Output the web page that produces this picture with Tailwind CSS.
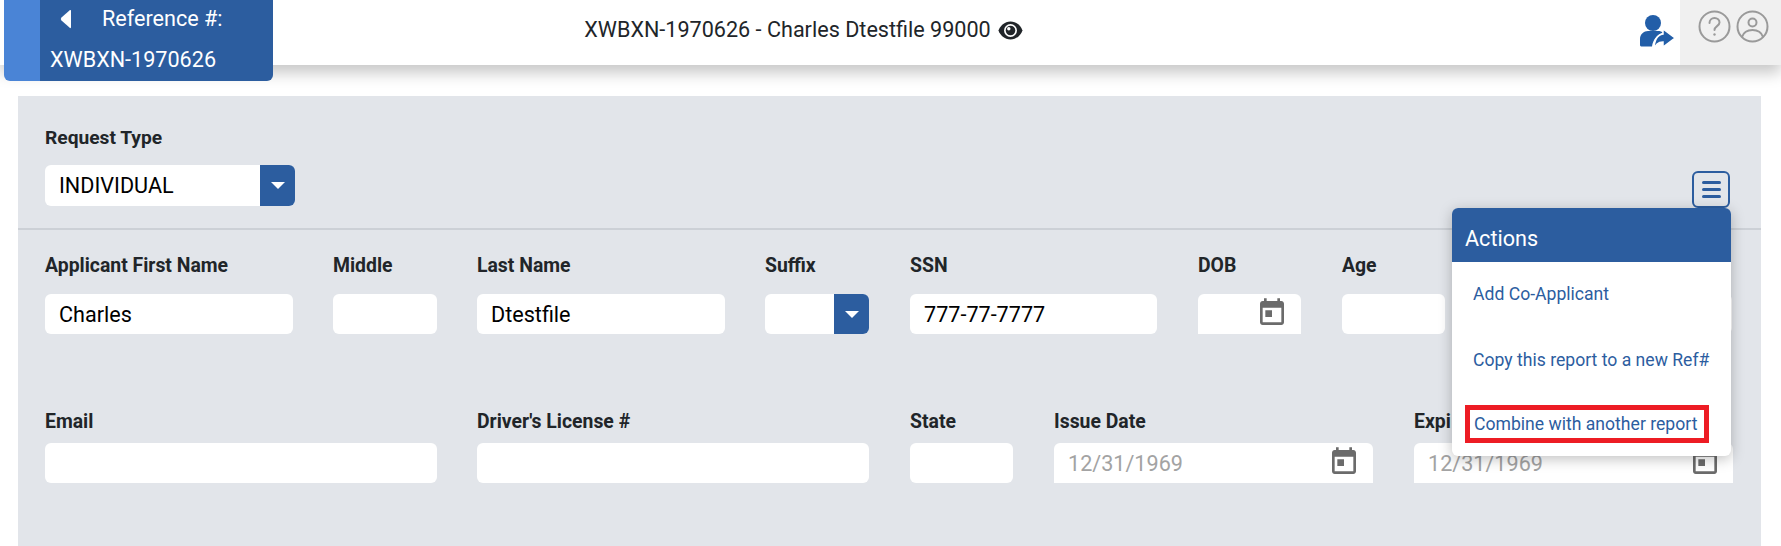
<!DOCTYPE html>
<html lang="en">
<head>
    <meta charset="UTF-8">
    <title>Reference XWBXN-1970626</title>
    <script src="https://cdn.jsdelivr.net/npm/@tailwindcss/browser@4"></script>
</head>
<body class="bg-white h-[546px] overflow-hidden font-['Roboto',sans-serif] text-[#212529]">

    <!-- top bar -->
    <header class="relative z-10 h-[65px] bg-white flex shadow-[0_8px_14px_rgba(0,0,0,0.22)]">
        <div class="absolute left-[4px] top-0 w-[269px] h-[81px] rounded-b-[6px] bg-[#2c5d9f] border-l-[36px] border-[#4a84d6] text-white text-[21.6px] leading-[24px]">
            <div class="flex items-center h-[42px] pb-[4px]">
                <svg class="ml-[20px] w-[11px] h-[20px]" viewBox="0 0 11 20" fill="white"><path d="M10 1 L1.5 8.5 Q0 10 1.5 11.500 L10 19 Q11 19.5 11 18 V2 Q11 .5 10 1z"/></svg>
                <span class="ml-[31px]">Reference #:</span>
            </div>
            <div class="pl-[10px] pt-[6px]">XWBXN-1970626</div>
        </div>

        <div class="flex-1 flex items-center justify-center pr-[27px] pb-[4px] gap-[7px] text-[21.6px]">
            <span>XWBXN-1970626 - Charles Dtestfile 99000</span>
            <svg class="w-[25px] h-[19px] mb-[1px]" viewBox="0 0 25 19">
                <path fill="#212529" d="M12.500 .5C6.500.5 2 5 .5 9.500 2 14 6.500 18.500 12.500 18.500s10.500-4.500 12-9C23 5 18.500.5 12.500.5z"/>
                <circle cx="12.500" cy="9.500" r="6.500" fill="white"/>
                <circle cx="12.500" cy="9.500" r="4.800" fill="#212529"/>
                <circle cx="10.800" cy="7.800" r="1.700" fill="white"/>
            </svg>
        </div>

        <div class="w-[46px] flex items-start pt-[14px] pl-[5px]">
            <svg class="w-[36px] h-[38px] shrink-0" viewBox="0 0 36 38" fill="#225ea8">
                <circle cx="14" cy="9" r="8"/>
                <path d="M1 31v-6c0-5 4-8 8-8h10c2 0 4 .6 5 1.500-6 2-10 7-11 14H3c-1 0-2-.5-2-1.500z"/>
                <path d="M24 15l12 9-12 9v-5c-5 0-8 3-9 8 0-9 3-15 9-16z" stroke="white" stroke-width="1.500"/>
            </svg>
        </div>

        <div class="w-[101px] bg-[#f0f0f0] flex items-start gap-[5px] pt-[10px] pl-[18px]">
            <svg class="w-[33px] h-[33px]" viewBox="0 0 33 33" fill="none" stroke="#9a9a9a" stroke-width="2"><circle cx="16.500" cy="16.500" r="15"/><path d="M11.500 13c0-3 2.200-5 5-5s5 2 5 4.500c0 3.500-5 3.800-5 7.500" stroke-linecap="round"/><circle cx="16.500" cy="24.500" r="1.200" fill="#9a9a9a" stroke="none"/></svg>
            <svg class="w-[33px] h-[33px]" viewBox="0 0 33 33" fill="none" stroke="#9a9a9a" stroke-width="2"><circle cx="16.500" cy="16.500" r="15"/><circle cx="16.500" cy="12.500" r="4"/><path d="M6 27c1.500-4.500 5-7 10.500-7S25.500 22.500 27 27"/></svg>
        </div>
    </header>

    <!-- form panel -->
    <main class="relative ml-[18px] mr-[20px] mt-[31px] h-[450px] bg-[#e2e5ea]">
        <section class="h-[134px] border-b-2 border-[#ccd0d6] px-[27px] pt-[32px]">
            <label class="block text-[19.2px] leading-[20px] font-bold">Request Type</label>
            <div class="mt-[17px] w-[250px] h-[41px] bg-white rounded-[6px] flex overflow-hidden">
                <span class="flex-1 pl-[14px] text-[21.6px] leading-[41px] text-black">INDIVIDUAL</span>
                <span class="w-[35px] bg-[#2c5d9f] flex items-center justify-center">
                    <span class="w-0 h-0 border-x-[7px] border-x-transparent border-t-[7px] border-t-white"></span>
                </span>
            </div>
            <button class="absolute left-[1674px] top-[75px] w-[38px] h-[37px] rounded-[6px] border-2 border-[#2c5d9f] flex flex-col items-center justify-center gap-[4px]">
                <span class="w-[19px] h-[3px] bg-[#2c5d9f] rounded-full"></span>
                <span class="w-[19px] h-[3px] bg-[#2c5d9f] rounded-full"></span>
                <span class="w-[19px] h-[3px] bg-[#2c5d9f] rounded-full"></span>
            </button>
        </section>

        <section class="px-[27px] pt-[26px] grid grid-cols-[248px_104px_248px_104px_248px_104px_104px_247px] gap-x-[40px] [&>*:nth-child(n+5)]:ml-[1px]">
            <div>
                <label class="block text-[19.4px] leading-[20px] font-bold">Applicant First Name</label>
                <div class="mt-[18px] h-[40px] bg-white rounded-[6px] px-[14px] text-[21.6px] leading-[42px] text-black">Charles</div>
            </div>
            <div>
                <label class="block text-[19.4px] leading-[20px] font-bold">Middle</label>
                <div class="mt-[18px] h-[40px] bg-white rounded-[6px]"></div>
            </div>
            <div>
                <label class="block text-[19.4px] leading-[20px] font-bold">Last Name</label>
                <div class="mt-[18px] h-[40px] bg-white rounded-[6px] px-[14px] text-[21.6px] leading-[42px] text-black">Dtestfile</div>
            </div>
            <div>
                <label class="block text-[19.4px] leading-[20px] font-bold">Suffix</label>
                <div class="mt-[18px] h-[40px] bg-white rounded-[6px] flex justify-end overflow-hidden">
                    <span class="w-[35px] bg-[#2c5d9f] flex items-center justify-center">
                        <span class="w-0 h-0 border-x-[7px] border-x-transparent border-t-[7px] border-t-white"></span>
                    </span>
                </div>
            </div>
            <div>
                <label class="block text-[19.4px] leading-[20px] font-bold">SSN</label>
                <div class="mt-[18px] h-[40px] bg-white rounded-[6px] px-[14px] text-[21.6px] leading-[42px] text-black">777-77-7777</div>
            </div>
            <div>
                <label class="block text-[19.4px] leading-[20px] font-bold">DOB</label>
                <div class="mt-[18px] h-[40px] bg-white rounded-t-[6px] flex justify-end pr-[13px] pt-[3px]">
                    <svg class="w-8 h-8" viewBox="0 0 24 24" fill="#6b6b6b"><path d="M19 3h-1V1h-2v2H8V1H6v2H5c-1.110 0-1.990.9-1.990 2L3 19c0 1.100.89 2 2 2h14c1.100 0 2-.9 2-2V5c0-1.100-.9-2-2-2zm0 16H5V8h14v11zM7 10h5v5H7z"/></svg>
                </div>
            </div>
            <div>
                <label class="block text-[19.4px] leading-[20px] font-bold">Age</label>
                <div class="mt-[18px] h-[40px] bg-white rounded-[6px]"></div>
            </div>
            <div>
                <div class="h-[20px]"></div>
                <div class="mt-[18px] h-[40px] bg-white rounded-[6px]"></div>
            </div>
        </section>

        <section class="px-[27px] pt-[78px] grid grid-cols-[392px_392px_104px_320px_320px] gap-x-[40px]">
            <div>
                <label class="block text-[19.4px] leading-[20px] font-bold">Email</label>
                <div class="mt-[11px] h-[40px] bg-white rounded-[6px]"></div>
            </div>
            <div>
                <label class="block text-[19.4px] leading-[20px] font-bold">Driver's License #</label>
                <div class="mt-[11px] h-[40px] bg-white rounded-[6px]"></div>
            </div>
            <div class="ml-[1px]">
                <label class="block text-[19.4px] leading-[20px] font-bold">State</label>
                <div class="mt-[11px] h-[40px] bg-white rounded-[6px]"></div>
            </div>
            <div class="ml-[1px]">
                <label class="block text-[19.4px] leading-[20px] font-bold">Issue Date</label>
                <div class="mt-[11px] h-[40px] bg-white rounded-t-[6px] flex justify-between pl-[14px] pr-[13px] text-[21.6px] leading-[42px] text-[#a3a3a3]">
                    12/31/1969
                    <svg class="w-8 h-8 mt-[3px]" viewBox="0 0 24 24" fill="#6b6b6b"><path d="M19 3h-1V1h-2v2H8V1H6v2H5c-1.110 0-1.990.9-1.990 2L3 19c0 1.100.89 2 2 2h14c1.100 0 2-.9 2-2V5c0-1.100-.9-2-2-2zm0 16H5V8h14v11zM7 10h5v5H7z"/></svg>
                </div>
            </div>
            <div class="ml-[1px]">
                <label class="block text-[19.4px] leading-[20px] font-bold">Expi</label>
                <div class="mt-[11px] h-[40px] bg-white rounded-t-[6px] flex justify-between pl-[14px] pr-[12px] text-[21.6px] leading-[42px] text-[#a3a3a3]">
                    12/31/1969
                    <svg class="w-8 h-8 mt-[3px]" viewBox="0 0 24 24" fill="#6b6b6b"><path d="M19 3h-1V1h-2v2H8V1H6v2H5c-1.110 0-1.990.9-1.990 2L3 19c0 1.100.89 2 2 2h14c1.100 0 2-.9 2-2V5c0-1.100-.9-2-2-2zm0 16H5V8h14v11zM7 10h5v5H7z"/></svg>
                </div>
            </div>
        </section>

        <!-- actions menu -->
        <div class="absolute left-[1434px] top-[112px] w-[279px] h-[248px] bg-white rounded-[6px] overflow-hidden shadow-[0_3px_14px_rgba(0,0,0,0.25)]">
            <div class="h-[54px] bg-[#2c5d9f] text-white text-[21.6px] leading-[62px] pl-[13px]">Actions</div>
            <div class="text-[#2c5d9f] text-[17.6px] leading-[20px]">
                <a class="block pl-[21px] pt-[22px]">Add Co-Applicant</a>
                <a class="block pl-[21px] pt-[46px]">Copy this report to a new Ref#</a>
                <a class="block ml-[13px] mt-[35px] w-[244px] h-[38px] border-[5px] border-[#ed1c24] pl-[4px] leading-[28px]">Combine with another report</a>
            </div>
        </div>
    </main>

</body>
</html>
